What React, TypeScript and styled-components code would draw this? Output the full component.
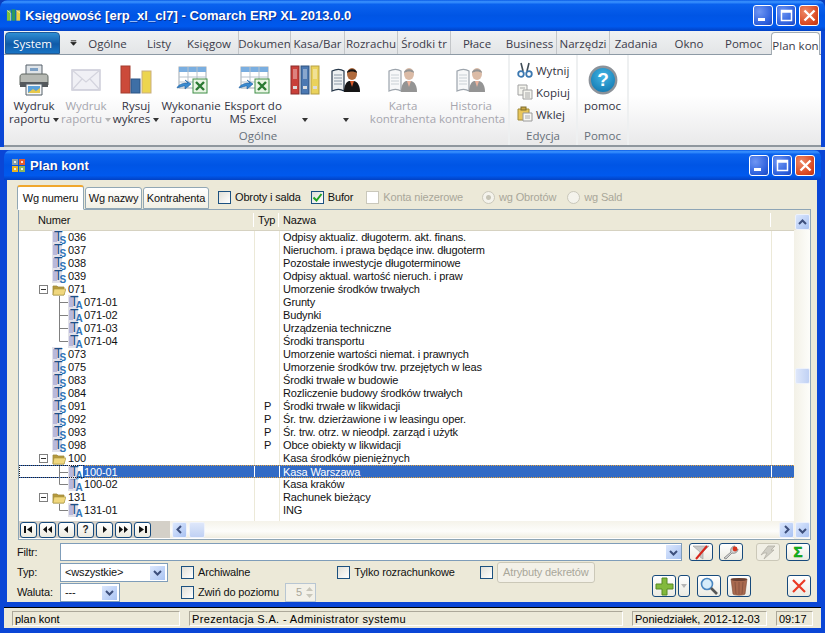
import React from "react";
import styled, { createGlobalStyle, css } from "styled-components";

const GlobalStyle = createGlobalStyle`
  html, body { margin: 0; padding: 0; background: #0b3fbd; }
  body { font-family: "Liberation Sans", "DejaVu Sans", sans-serif; }
  * { box-sizing: border-box; }
`;

const UI = `"Liberation Sans", "DejaVu Sans", sans-serif`;
const RIBBON = `"Open Sans", "DejaVu Sans", sans-serif`;

const Frame = styled.div`
  width: 825px;
  height: 633px;
  display: flex;
  flex-direction: column;
  overflow: hidden;
  padding: 0 4px 5px;
  background: #0a46d6;
  border-radius: 8px 8px 0 0;
`;

const TitleBar = styled.div<{ $h: number; $inner?: boolean }>`
  height: ${(p) => p.$h}px;
  flex: none;
  display: flex;
  align-items: center;
  gap: 3px;
  margin: ${(p) => (p.$inner ? "0" : "0 -4px")};
  padding: ${(p) => (p.$inner ? "0 6px 0 7px" : "0 6px 0 6px")};
  background: linear-gradient(180deg, #0a5be6 0, #3d95ff 6%, #0a62ee 14%, #0055e5 50%, #0059ee 85%, #0241c4 100%);
  border-radius: 7px 7px 0 0;
`;

const TitleText = styled.div<{ $ml: number }>`
  flex: 1;
  margin-left: ${(p) => p.$ml}px;
  color: #fff;
  font: bold 13px ${UI};
  letter-spacing: 0.05px;
  text-shadow: 1px 1px 0 #0b2f90;
  white-space: nowrap;
`;

const WinBtn = styled.div<{ $close?: boolean }>`
  width: 20px;
  height: 21px;
  flex: none;
  border: 1px solid #fff;
  border-radius: 3px;
  display: flex;
  align-items: center;
  justify-content: center;
  background: ${(p) =>
    p.$close
      ? "radial-gradient(circle at 30% 30%, #ee8a68, #d8461f 70%, #b93311)"
      : "radial-gradient(circle at 30% 30%, #6f96f3, #2c5fdc 70%, #1c46bd)"};
`;

const TabsRow = styled.div`
  height: 24px;
  flex: none;
  display: flex;
  align-items: stretch;
  padding-left: 1px;
  background: linear-gradient(180deg, #f0f2f3, #e3e5e7);
  border-bottom: 1px solid #8d9aa5;
  font: 11.5px ${RIBBON};
`;

const SystemTab = styled.div`
  width: 55px;
  flex: none;
  margin-top: 1px;
  padding-top: 1px;
  display: flex;
  align-items: center;
  justify-content: center;
  color: #fff;
  border-radius: 4px 4px 0 0;
  border: 1px solid #1d5a98;
  background: linear-gradient(180deg, #2e8fd4, #0f5aa8 55%, #1974c4);
`;

const QuickArrow = styled.div`
  width: 17px;
  flex: none;
  padding-left: 10px;
  display: flex;
  align-items: center;
  justify-content: center;
`;

const RibbonTab = styled.div<{ $w: number; $divider?: boolean; $active?: boolean }>`
  width: ${(p) => p.$w}px;
  flex: none;
  padding-top: 2px;
  display: flex;
  align-items: center;
  justify-content: center;
  overflow: hidden;
  white-space: nowrap;
  color: #3b3b4a;
  ${(p) => p.$divider && "border-right: 1px solid #c3c6c9;"}
  ${(p) =>
    p.$active &&
    css`
      background: #fff;
      margin-bottom: -1px;
      margin-top: 1px;
      border: 1px solid #a3acb3;
      border-bottom: 0;
      border-radius: 4px 4px 0 0;
    `}
`;

const Ribbon = styled.div`
  height: 92px;
  flex: none;
  display: flex;
  padding-left: 4px;
  background: linear-gradient(180deg, #fff 0, #fff 45%, #e9e9ea 100%);
  border-bottom: 2px solid #8f979e;
  font: 11.5px/13px ${RIBBON};
`;

const RibbonGroup = styled.div<{ $w: number }>`
  width: ${(p) => p.$w}px;
  flex: none;
  display: flex;
  flex-direction: column;
  border-right: 2px solid #eef0f1;
`;

const GroupBody = styled.div`
  flex: 1;
  display: flex;
  min-height: 0;
`;

const GroupLabel = styled.div`
  height: 17px;
  flex: none;
  text-align: center;
  color: #67707a;
  line-height: 15px;
`;

const BigBtn = styled.div<{ $w: number; $off?: boolean }>`
  width: ${(p) => p.$w}px;
  flex: none;
  padding-top: 6px;
  text-align: center;
  color: ${(p) => (p.$off ? "#a6a6ae" : "#333342")};
  white-space: nowrap;
`;

const BigIcon = styled.div`
  height: 37px;
  margin-bottom: 1px;
  display: flex;
  align-items: center;
  justify-content: center;
`;

const Caret = styled.span<{ $off?: boolean; $bare?: boolean }>`
  display: inline-block;
  vertical-align: middle;
  margin-left: ${(p) => (p.$bare ? 0 : 3)}px;
  border: 3px solid transparent;
  border-top: 4px solid ${(p) => (p.$off ? "#b5b5b5" : "#333")};
  border-bottom: 0;
`;

const SmallStack = styled.div`
  flex: none;
  width: 66px;
  padding: 6px 0 0 7px;
  display: flex;
  flex-direction: column;
  gap: 4px;
  color: #333342;
`;

const SmallBtn = styled.div`
  height: 18px;
  display: flex;
  align-items: center;
  gap: 3px;
`;

const Gap = styled.div`
  height: 3px;
  flex: none;
  background: #dfe1e3;
  margin: 0 -4px;
`;

const Blue = styled.div`
  flex: 1;
  min-height: 0;
  display: flex;
  flex-direction: column;
  background: #0a46d6;
  border-bottom: 1px solid #000;
`;

const Client = styled.div`
  flex: 1;
  min-height: 0;
  display: flex;
  flex-direction: column;
  padding: 5px 6px 0 10px;
  margin: 0 4px 5px 3px;
  background: #ece9d8;
  color: #111;
  font: 11px/13px ${UI};
  letter-spacing: -0.15px;
`;

const Strip = styled.div`
  height: 24px;
  flex: none;
  display: flex;
  align-items: center;
  position: relative;
  z-index: 1;
`;

const PageTab = styled.div<{ $w: number; $active?: boolean }>`
  width: ${(p) => p.$w}px;
  height: ${(p) => (p.$active ? 25 : 22)}px;
  margin-right: 1px;
  margin-bottom: ${(p) => (p.$active ? -1 : 0)}px;
  display: flex;
  align-items: center;
  justify-content: center;
  align-self: flex-end;
  background: ${(p) => (p.$active ? "#fff" : "linear-gradient(180deg,#fff,#f1efe4)")};
  border: 1px solid #91a7b4;
  border-bottom: ${(p) => (p.$active ? "1px solid #fff" : "1px solid #91a7b4")};
  border-top: ${(p) => (p.$active ? "2px solid #f0a72e" : "1px solid #91a7b4")};
  border-radius: 3px 3px 0 0;
`;

const Check = styled.div<{ $ml?: number }>`
  display: flex;
  align-items: center;
  gap: 4px;
  margin-left: ${(p) => p.$ml ?? 0}px;
  white-space: nowrap;
`;

const CheckBox = styled.div<{ $off?: boolean }>`
  width: 13px;
  height: 13px;
  flex: none;
  display: flex;
  align-items: center;
  justify-content: center;
  border: 1px solid ${(p) => (p.$off ? "#cac8bb" : "#1c5180")};
  background: ${(p) => (p.$off ? "#fff" : "linear-gradient(135deg,#e0dfd7,#fff)")};
`;

const Radio = styled.div<{ $dot?: boolean }>`
  width: 13px;
  height: 13px;
  flex: none;
  border-radius: 50%;
  border: 1px solid #cac8bb;
  background: radial-gradient(circle, ${(p) => (p.$dot ? "#c6c4b6 0 2px" : "#f4f3ec 0 2px")}, #f4f3ec 3px);
`;

const Muted = styled.span`
  color: #a9a79a;
`;

const Panel = styled.div`
  height: 331px;
  flex: none;
  margin-left: 1px;
  display: flex;
  border: 1px solid #8ea5b6;
  background: #fff;
`;

const Columns = "235px 25px 492px 1fr";

const HeaderRow = styled.div`
  height: 21px;
  flex: none;
  display: grid;
  grid-template-columns: ${Columns};
  align-items: end;
  padding-bottom: 3px;
  background: #ece9d8;
  border-bottom: 1px solid #d6d2c1;
`;

const HeadCell = styled.div<{ $pad: number }>`
  height: 14px;
  padding-left: ${(p) => p.$pad}px;
  border-right: 1px solid #fff;
  line-height: 14px;
`;

const ListCol = styled.div`
  flex: 1;
  min-width: 0;
  display: flex;
  flex-direction: column;
`;

const Rows = styled.div`
  flex: 1;
  min-height: 0;
  background-image: linear-gradient(#ece9d8, #ece9d8), linear-gradient(#ece9d8, #ece9d8), linear-gradient(#ece9d8, #ece9d8);
  background-size: 1px 100%;
  background-repeat: no-repeat;
  background-position: 235px 0, 260px 0, 752px 0;
`;

const RowBox = styled.div<{ $sel?: boolean }>`
  height: 13px;
  display: grid;
  grid-template-columns: ${Columns};
  line-height: 13px;
  white-space: nowrap;
  ${(p) =>
    p.$sel &&
    css`
      position: relative;
      color: #fff;
      background-color: #316ac5;
      background-image: linear-gradient(#fff, #fff), linear-gradient(#fff, #fff), linear-gradient(#fff, #fff), linear-gradient(#fff, #fff);
      background-size: 64px 100%, 1px 100%, 1px 100%, 1px 100%;
      background-position: 0 0, 235px 0, 260px 0, 752px 0;
      background-repeat: no-repeat;
      border-top: 1px dotted #e8a33a;
      border-bottom: 1px dotted #e8a33a;
      &::before {
        content: "";
        position: absolute;
        left: 0;
        top: -1px;
        bottom: -1px;
        width: 64px;
        border: 1px dotted #222;
        border-right: 0;
      }
    `}
`;

const TreeCell = styled.div`
  display: flex;
  align-items: center;
  height: 13px;
`;

const Spacer = styled.div<{ $w: number }>`
  width: ${(p) => p.$w}px;
  height: 100%;
  flex: none;
`;

const Expander = styled.div`
  width: 9px;
  height: 9px;
  flex: none;
  margin-left: 20px;
  margin-right: 4px;
  border: 1px solid #7f7f7f;
  position: relative;
  background: #fff;
  &::after {
    content: "";
    position: absolute;
    left: 1px;
    right: 1px;
    top: 3px;
    height: 1px;
    background: #333;
  }
`;

const Code = styled.span`
  margin-left: 1px;
  position: relative;
`;

const TypCell = styled.div`
  text-align: center;
  padding-left: 2px;
`;

const NameCell = styled.div`
  padding-left: 4px;
  overflow: hidden;
`;

const HBar = styled.div`
  height: 17px;
  margin-bottom: 1px;
  flex: none;
  display: flex;
  align-items: center;
  background: linear-gradient(180deg, #f5f3ea, #fdfdfb 60%, #f0ede1);
`;

const NavGroup = styled.div`
  width: 151px;
  height: 100%;
  flex: none;
  display: flex;
  align-items: center;
  padding-left: 1px;
  gap: 2px;
  background: #d4d0c8;
`;

const NavBtn = styled.div`
  width: 17px;
  height: 16px;
  flex: none;
  display: flex;
  align-items: center;
  justify-content: center;
  border: 1px solid #174a7c;
  border-radius: 3px;
  background: linear-gradient(180deg, #fff, #eceadf);
  font: bold 10px ${UI};
  color: #222;
`;

const ScrollArrow = styled.div<{ $ml?: number }>`
  width: 15px;
  height: 16px;
  flex: none;
  margin-left: ${(p) => p.$ml ?? 0}px;
  display: flex;
  align-items: center;
  justify-content: center;
  border: 1px solid #eef2fb;
  border-radius: 2px;
  background: linear-gradient(135deg, #dbe7fd, #a9c2f2);
`;

const ThumbH = styled(ScrollArrow)`
  width: 16px;
  margin-left: 2px;
  background: linear-gradient(180deg, #dee7fa, #c0d1f4);
`;

const Flex1 = styled.div`
  flex: 1;
`;

const VBar = styled.div`
  width: 16px;
  flex: none;
  display: flex;
  flex-direction: column;
  align-items: center;
  padding: 4px 0 1px;
  background:
    linear-gradient(#ece9d8, #ece9d8) 0 0 / 100% 20px no-repeat,
    linear-gradient(90deg, #f3f1e7, #fdfdfa);
`;

const VThumb = styled(ScrollArrow)`
  margin-top: 138px;
  background: linear-gradient(90deg, #dee7fa, #c0d1f4);
`;

const Foot = styled.div`
  flex: 1;
  min-height: 0;
  padding-top: 2px;
  display: grid;
  grid-template-columns: 43px 108px 13px 1fr;
  grid-template-rows: 20px 21px 19px;
`;

const FieldLabel = styled.div<{ $row?: number }>`
  align-self: center;
  ${(p) => p.$row && `grid-row: ${p.$row}; grid-column: 1;`}
`;

const FilterRow = styled.div`
  grid-column: 2 / 5;
  display: flex;
  align-items: center;
`;

const Input = styled.div<{ $w?: number; $row?: number }>`
  width: ${(p) => (p.$w ? `${p.$w}px` : "622px")};
  height: 18px;
  flex: none;
  display: flex;
  align-items: center;
  padding-left: 3px;
  border: 1px solid #7f9db9;
  background: #fff;
  ${(p) => p.$row && `grid-row: ${p.$row}; grid-column: 2;`}
`;

const Grow = styled.div`
  flex: 1;
`;

const DropBtn = styled.div`
  width: 15px;
  height: 14px;
  flex: none;
  display: flex;
  align-items: center;
  justify-content: center;
  background: linear-gradient(135deg, #dbe7fd, #aac4f3);
`;

const ToolBtn = styled.div<{ $w?: number; $ml?: number; $off?: boolean }>`
  width: ${(p) => p.$w ?? 24}px;
  height: 18px;
  flex: none;
  margin-left: ${(p) => p.$ml ?? 0}px;
  display: flex;
  align-items: center;
  justify-content: center;
  border: 1px solid ${(p) => (p.$off ? "#cbc8b8" : "#174a7c")};
  border-radius: 3px;
  background: ${(p) => (p.$off ? "#f1efe5" : "linear-gradient(180deg,#fff,#ecebe2)")};
`;

const TallBtn = styled(ToolBtn)`
  height: 22px;
`;

const OptRow = styled.div`
  grid-column: 3 / 5;
  grid-row: 2 / 4;
  display: flex;
  flex-direction: column;
`;

const OptLine = styled.div<{ $h: number }>`
  height: ${(p) => p.$h}px;
  flex: none;
  display: flex;
  align-items: center;
  padding-left: 13px;
`;

const AttrBtn = styled.div`
  width: 98px;
  height: 21px;
  margin-left: 4px;
  display: flex;
  align-items: center;
  justify-content: center;
  color: #a9a79a;
  border: 1px solid #cbc8b8;
  border-radius: 3px;
  background: #f3f1e8;
`;

const Spin = styled.div`
  width: 31px;
  height: 19px;
  margin-left: 6px;
  flex: none;
  display: flex;
  align-items: center;
  justify-content: space-between;
  padding: 0 1px 0 10px;
  color: #a9a79a;
  background: #f3f1e8;
  border: 1px solid #b8c6d2;
`;

const SelectBox = styled(Input)`
  justify-content: space-between;
  padding: 0 2px 0 4px;
  align-self: center;
  height: 19px;
`;

const BtnCluster = styled.div`
  margin-top: -13px;
  display: flex;
  align-items: flex-start;
`;

const StatusBar = styled.div`
  height: 20px;
  flex: none;
  display: flex;
  align-items: center;
  gap: 9px;
  padding: 0 5px 0 8px;
  background: #ece9d8;
  font: 11px ${UI};
`;

const StatusPane = styled.div<{ $w: number; $ls?: number }>`
  width: ${(p) => p.$w}px;
  height: 15px;
  flex: none;
  padding-left: 2px;
  line-height: 14px;
  letter-spacing: ${(p) => p.$ls ?? 0}px;
  white-space: nowrap;
  overflow: hidden;
  border: 1px solid;
  border-color: #aca899 #fff #fff #aca899;
`;

/* ---- icons ---- */

const MdiLogo = () => (
  <svg width="16" height="17" viewBox="0 0 17 17">
    <rect x="1" y="3" width="4" height="11" fill="#7fc23a" />
    <rect x="6" y="2" width="4" height="12" fill="#2e9a5a" />
    <rect x="11" y="3" width="4" height="11" fill="#e8d040" />
    <path d="M1 3l4 3v8M11 3l4 3" stroke="#fff" strokeWidth="0.6" fill="none" />
  </svg>
);

const MiniWin = ({ kind }: { kind: "min" | "max" | "close" }) => (
  <svg width="15" height="15" viewBox="0 0 15 15">
    {kind === "min" && <rect x="2" y="10" width="7" height="3" fill="#fff" />}
    {kind === "max" && <path d="M2.500 2.500h10v10h-10zM2.500 4h10" stroke="#fff" strokeWidth="1.500" fill="none" />}
    {kind === "close" && <path d="M2.500 2.500l10 10M12.500 2.500l-10 10" stroke="#fff" strokeWidth="2.400" />}
  </svg>
);

const PlanIcon = () => (
  <svg width="15" height="15" viewBox="0 0 15 15">
    <rect x="1" y="1" width="6" height="6" fill="#8aa0a8" />
    <rect x="8" y="1" width="6" height="6" fill="#e25a2c" />
    <rect x="1" y="8" width="6" height="6" fill="#eab321" />
    <rect x="8" y="8" width="6" height="6" fill="#8fb65c" />
    <path d="M3 3h2v2H3zM10 3h2v2h-2zM3 10h2v2H3zM10 10h2v2h-2z" fill="#fff" opacity=".8" />
  </svg>
);

const Printer = () => (
  <svg width="32" height="32" viewBox="0 0 32 32">
    <path d="M8 1h16v10H8z" fill="#dfe4e8" stroke="#56606a" />
    <path d="M12 4h8v3h-8z" fill="#7da0c4" />
    <path d="M2 13c0-2 1-3 3-3h22c2 0 3 1 3 3v8H2z" fill="#b6b9b3" stroke="#5e6660" />
    <path d="M2 18h28v5H2z" fill="#54595c" />
    <path d="M8 20h16v11H8z" fill="#f5f6f6" stroke="#54606a" />
    <path d="M10 22h12v7H10z" fill="#5aa0d8" />
    <path d="M10 29l5-4 3 2 4-3v5z" fill="#e7c94c" />
  </svg>
);

const Envelope = () => (
  <svg width="30" height="24" viewBox="0 0 30 24">
    <path d="M1 2h28v20H1z" fill="#f0f0f5" stroke="#c9c9d6" strokeWidth="1.400" />
    <path d="M1 2l14 12L29 2M1 22l10-11M29 22L19 11" fill="none" stroke="#d4d4de" strokeWidth="1.200" />
  </svg>
);

const Bars = () => (
  <svg width="32" height="32" viewBox="0 0 32 32">
    <rect x="1" y="2" width="9" height="27" fill="#cc4a3a" stroke="#a33c2e" />
    <rect x="11" y="15" width="9" height="14" fill="#3e6fa6" stroke="#2b5485" />
    <rect x="22" y="7" width="9" height="22" fill="#ecd54f" stroke="#c9ae7e" />
  </svg>
);

const SheetExport = () => (
  <svg width="34" height="28" viewBox="0 0 34 28">
    <rect x="5" y="1" width="27" height="21" fill="#fff" stroke="#9fa9b2" />
    <rect x="5" y="1" width="27" height="5" fill="#7aaee0" />
    <path d="M5 11h27M5 16h27M14 1v21M23 1v21" stroke="#b7c2cc" />
    <rect x="19" y="13" width="14" height="14" fill="#e9f5e4" stroke="#3f8e47" />
    <path d="M22 16l8 8M30 16l-8 8" stroke="#2b7a33" strokeWidth="2.400" />
    <path d="M14 17c-6 0-10 2-11 5 3-1 6-2 8-2v3l6-5-6-4z" fill="#3a8bd0" stroke="#1d5c9e" strokeWidth=".6" />
  </svg>
);

const Binders = () => (
  <svg width="30" height="30" viewBox="0 0 30 30">
    <rect x="1" y="1" width="8" height="28" fill="#c9403a" stroke="#8a2c2a" />
    <rect x="11" y="1" width="8" height="28" fill="#4b78b2" stroke="#2f527f" />
    <rect x="21" y="1" width="8" height="28" fill="#ead25c" stroke="#b8a244" />
    <path d="M3 4h4v10H3zM13 4h4v10h-4zM23 4h4v10h-4z" fill="#fff" opacity=".35" />
    <path d="M3 21h4v3H3zM13 21h4v3h-4zM23 21h4v3h-4z" fill="#dcdcdc" />
  </svg>
);

const BookPerson = ({ off }: { off?: boolean }) => (
  <svg width="30" height="30" viewBox="0 0 30 30" opacity={off ? 0.45 : 1}>
    <path d="M1 6c4-2 9-2 12 0v20c-3-2-8-2-12 0z" fill="#eef1f2" stroke="#27384a" strokeWidth="1.200" />
    <path d="M3 10h8M3 13h8M3 16h8M3 19h8" stroke="#8a98a6" />
    <path d="M13 27c0-6 2-10 5-11h5c4 1 6 5 6 11z" fill="#151515" />
    <path d="M19 16l2 6 2-6z" fill="#d65a2a" />
    <ellipse cx="21" cy="9" rx="5" ry="6" fill="#b06a3c" />
    <path d="M16 8c0-5 10-5 10 0-3-2-7-2-10 0z" fill="#151515" />
  </svg>
);

const Scissors = () => (
  <svg width="16" height="16" viewBox="0 0 16 16">
    <path d="M6 9L4 1M10 9l2-8" stroke="#3f4c57" strokeWidth="1.600" />
    <circle cx="4" cy="12" r="2.800" fill="#fff" stroke="#3a77b0" strokeWidth="1.800" />
    <circle cx="12" cy="12" r="2.800" fill="#fff" stroke="#3a77b0" strokeWidth="1.800" />
  </svg>
);

const CopyIcon = () => (
  <svg width="16" height="16" viewBox="0 0 16 16">
    <path d="M1 1h9v10H1z" fill="#f4f4ee" stroke="#a0a0a0" />
    <path d="M6 6h9v9H6z" fill="#f4f4ee" stroke="#a0a0a0" />
    <path d="M3 4h5M8 9h5M8 11h5M8 13h5" stroke="#a8a8a8" />
  </svg>
);

const PasteIcon = () => (
  <svg width="16" height="16" viewBox="0 0 16 16">
    <path d="M1 3h11v11H1z" fill="#e9c65a" stroke="#a08a3a" />
    <rect x="4" y="1" width="5" height="3" fill="#c9a642" stroke="#7f6c2a" />
    <path d="M6 7h9v8H6z" fill="#f7f7f4" stroke="#9a9a9a" />
    <path d="M8 10h5M8 12h5" stroke="#aaa" />
  </svg>
);

const Help = () => (
  <svg width="30" height="30" viewBox="0 0 30 30">
    <defs>
      <radialGradient id="hb" cx=".5" cy=".35" r=".7">
        <stop offset="0" stopColor="#43b6e6" />
        <stop offset="1" stopColor="#0f74ad" />
      </radialGradient>
    </defs>
    <circle cx="15" cy="15" r="13.200" fill="url(#hb)" stroke="#8c9299" strokeWidth="2.400" />
    <text x="15" y="21" textAnchor="middle" fontFamily="Liberation Sans" fontWeight="bold" fontSize="19" fill="#fff">?</text>
  </svg>
);

const LeafIcon = ({ letter }: { letter: "S" | "A" }) => (
  <svg width="15" height="16" viewBox="0 0 15 16" style={{ flex: "none", margin: "-2px 0 -1px", overflow: "visible" }}>
    <rect x="0" y="1" width="10" height="14" fill="#e1e1ea" />
    <path d="M1 4h4M1 6h4M1 8h4M1 10h4M1 12h4" stroke="#7c7cc4" strokeWidth=".8" />
    <text x="2" y="12" fontFamily="Liberation Sans" fontSize="14" fill="#1c4f88">T</text>
    <text x="7.500" y="15" fontFamily="Liberation Sans" fontWeight="bold" fontSize="10" fill="#2f74b8">{letter}</text>
  </svg>
);

const Folder = () => (
  <svg width="14" height="12" viewBox="0 0 14 12" style={{ flex: "none" }}>
    <path d="M1 11V2h4l1 1h6v8z" fill="#b79a3c" stroke="#9f8a40" strokeWidth=".8" />
    <path d="M1 11l1-6h12l-2 6z" fill="#f0d77e" stroke="#a8933e" strokeWidth=".6" />
  </svg>
);

const Branch = ({ last }: { last?: boolean }) => (
  <svg width="9" height="13" viewBox="0 0 9 13" style={{ flex: "none", position: "relative" }}>
    <path d={last ? "M.5 0v6.500H9" : "M.5 0v13M.5 6.500H9"} stroke="#808080" fill="none" />
  </svg>
);

const Chevron = ({ dir }: { dir: "up" | "down" | "left" | "right" }) => {
  const d = {
    up: "M1 6l3.500-3.500L8 6",
    down: "M1 3l3.500 3.500L8 3",
    left: "M6 1L2.500 4.500 6 8",
    right: "M3 1l3.500 3.500L3 8",
  }[dir];
  return (
    <svg width="9" height="9" viewBox="0 0 9 9">
      <path d={d} stroke="#3d4f7c" strokeWidth="2" fill="none" />
    </svg>
  );
};

const NavGlyph = ({ d }: { d: string }) => (
  <svg width="11" height="9" viewBox="0 0 11 9">
    <path d={d} fill="#111" />
  </svg>
);

const FilterOff = () => (
  <svg width="18" height="15" viewBox="0 0 18 15">
    <path d="M1 1h16l-6 6v7l-3-2V7z" fill="#c8c8c8" stroke="#9a9a9a" strokeWidth=".6" />
    <path d="M15 1L4 14" stroke="#d8261c" strokeWidth="2" />
  </svg>
);

const Wrench = () => (
  <svg width="18" height="15" viewBox="0 0 18 15">
    <path d="M2 13l7-6c-1-3 1-6 4-6l-2 3 2 2 3-2c0 3-3 5-6 4l-6 6z" fill="#d3d3d3" stroke="#7c7c7c" strokeWidth=".8" />
    <circle cx="13" cy="4" r="2.400" fill="#d8351f" />
  </svg>
);

const Bolt = () => (
  <svg width="18" height="15" viewBox="0 0 18 15">
    <path d="M9 1h7l-4 4h3L5 14l3-6H5l-3 2z" fill="#cfcdc4" stroke="#b2b0a6" strokeWidth=".8" />
  </svg>
);

const Sigma = () => (
  <svg width="16" height="16" viewBox="0 0 16 16" style={{ overflow: "visible" }}>
    <text x="8" y="13" textAnchor="middle" fontFamily="Liberation Sans" fontWeight="bold" fontSize="15" fill="#0fc41a" stroke="#0a7d12" strokeWidth=".5">Σ</text>
  </svg>
);

const Plus = () => (
  <svg width="19" height="19" viewBox="0 0 19 19">
    <path d="M7 1h5v6h6v5h-6v6H7v-6H1V7h6z" fill="#82b93c" stroke="#568a25" />
  </svg>
);

const Loupe = () => (
  <svg width="18" height="18" viewBox="0 0 18 18">
    <circle cx="7" cy="7" r="5.500" fill="#d6ecfa" stroke="#4a86c0" strokeWidth="1.600" />
    <path d="M11 11l6 6" stroke="#565656" strokeWidth="2.600" />
  </svg>
);

const Bin = () => (
  <svg width="18" height="19" viewBox="0 0 18 19">
    <path d="M1 2h16l-2 15c-1 1.500-11 1.500-12 0z" fill="#a8694e" stroke="#7c4a36" strokeWidth=".6" />
    <ellipse cx="9" cy="2.500" rx="8" ry="1.600" fill="#6b4031" />
    <path d="M5 5l1 12M9 5v12M13 5l-1 12" stroke="#8a5540" />
  </svg>
);

const RedX = () => (
  <svg width="16" height="16" viewBox="0 0 16 16">
    <path d="M2 2l12 12M14 2L2 14" stroke="#ea3a24" strokeWidth="2.200" />
  </svg>
);

const Tick = () => (
  <svg width="11" height="11" viewBox="0 0 11 11">
    <path d="M1.500 5.500l3 3 5-6.500" stroke="#21a121" strokeWidth="2" fill="none" />
  </svg>
);

/* ---- data ---- */

type Row = {
  code: string;
  name: string;
  kind: "S" | "folder" | "A";
  typ?: string;
  last?: boolean;
  sel?: boolean;
};

const rows: Row[] = [
  { code: "036", name: "Odpisy aktualiz. długoterm. akt. finans.", kind: "S" },
  { code: "037", name: "Nieruchom. i prawa będące inw. długoterm", kind: "S" },
  { code: "038", name: "Pozostałe inwestycje długoterminowe", kind: "S" },
  { code: "039", name: "Odpisy aktual. wartość nieruch. i praw", kind: "S" },
  { code: "071", name: "Umorzenie środków trwałych", kind: "folder" },
  { code: "071-01", name: "Grunty", kind: "A" },
  { code: "071-02", name: "Budynki", kind: "A" },
  { code: "071-03", name: "Urządzenia techniczne", kind: "A" },
  { code: "071-04", name: "Środki transportu", kind: "A", last: true },
  { code: "073", name: "Umorzenie wartości niemat. i prawnych", kind: "S" },
  { code: "075", name: "Umorzenie środków trw. przejętych w leas", kind: "S" },
  { code: "083", name: "Środki trwałe w budowie", kind: "S" },
  { code: "084", name: "Rozliczenie budowy środków trwałych", kind: "S" },
  { code: "091", name: "Środki trwałe w likwidacji", kind: "S", typ: "P" },
  { code: "092", name: "Śr. trw. dzierżawione i w leasingu oper.", kind: "S", typ: "P" },
  { code: "093", name: "Śr. trw. otrz. w nieodpł. zarząd i użytk", kind: "S", typ: "P" },
  { code: "098", name: "Obce obiekty w likwidacji", kind: "S", typ: "P" },
  { code: "100", name: "Kasa środków pieniężnych", kind: "folder" },
  { code: "100-01", name: "Kasa Warszawa", kind: "A", sel: true },
  { code: "100-02", name: "Kasa kraków", kind: "A", last: true },
  { code: "131", name: "Rachunek bieżący", kind: "folder" },
  { code: "131-01", name: "ING", kind: "A", last: true },
];

const tabs: { t: string; w: number; d?: boolean }[] = [
  { t: "Ogólne", w: 61 },
  { t: "Listy", w: 42 },
  { t: "Księgow", w: 59, d: true },
  { t: "Dokumen", w: 52, d: true },
  { t: "Kasa/Bar", w: 54, d: true },
  { t: "Rozrachu", w: 53, d: true },
  { t: "Środki tr", w: 53, d: true },
  { t: "Płace", w: 52 },
  { t: "Business", w: 54, d: true },
  { t: "Narzędzi", w: 53, d: true },
  { t: "Zadania", w: 52 },
  { t: "Okno", w: 54 },
  { t: "Pomoc", w: 55 },
];

const TreeRow = ({ row }: { row: Row }) => {
  let tree: React.ReactNode;
  if (row.kind === "S") {
    tree = (
      <>
        <Spacer $w={33} />
        <LeafIcon letter="S" />
      </>
    );
  } else if (row.kind === "folder") {
    tree = (
      <>
        <Expander />
        <Folder />
        <Spacer $w={1} />
      </>
    );
  } else {
    tree = (
      <>
        <Spacer $w={40} />
        <Branch last={row.last} />
        <LeafIcon letter="A" />
      </>
    );
  }
  return (
    <RowBox $sel={row.sel}>
      <TreeCell>
        {tree}
        <Code>{row.code}</Code>
      </TreeCell>
      <TypCell>{row.typ}</TypCell>
      <NameCell>{row.name}</NameCell>
    </RowBox>
  );
};

const App = () => (
  <Frame>
    <GlobalStyle />
    <TitleBar $h={31}>
      <MdiLogo />
      <TitleText $ml={0}>Księgowość [erp_xl_cl7] - Comarch ERP XL 2013.0.0</TitleText>
      <WinBtn><MiniWin kind="min" /></WinBtn>
      <WinBtn><MiniWin kind="max" /></WinBtn>
      <WinBtn $close><MiniWin kind="close" /></WinBtn>
    </TitleBar>
    <TabsRow>
      <SystemTab>System</SystemTab>
      <QuickArrow>
        <svg width="9" height="8" viewBox="0 0 9 8">
          <path d="M1 1h7M1 3h7l-3.500 4z" stroke="#222" fill="#222" strokeWidth="1" />
        </svg>
      </QuickArrow>
      {tabs.map((x) => (
        <RibbonTab key={x.t} $w={x.w} $divider={x.d}>{x.t}</RibbonTab>
      ))}
      <RibbonTab $w={49} $active>Plan kon</RibbonTab>
    </TabsRow>
    <Ribbon>
      <RibbonGroup $w={502}>
        <GroupBody>
          <BigBtn $w={52}>
            <BigIcon><Printer /></BigIcon>
            Wydruk<br />raportu<Caret />
          </BigBtn>
          <BigBtn $w={52} $off>
            <BigIcon><Envelope /></BigIcon>
            Wydruk<br />raportu<Caret $off />
          </BigBtn>
          <BigBtn $w={48}>
            <BigIcon><Bars /></BigIcon>
            Rysuj<br />wykres<Caret />
          </BigBtn>
          <BigBtn $w={62}>
            <BigIcon><SheetExport /></BigIcon>
            Wykonanie<br />raportu
          </BigBtn>
          <BigBtn $w={62}>
            <BigIcon><SheetExport /></BigIcon>
            Eksport do<br />MS Excel
          </BigBtn>
          <BigBtn $w={41}>
            <BigIcon><Binders /></BigIcon>
            <br /><Caret $bare />
          </BigBtn>
          <BigBtn $w={42}>
            <BigIcon><BookPerson /></BigIcon>
            <br /><Caret $bare />
          </BigBtn>
          <BigBtn $w={72} $off>
            <BigIcon><BookPerson off /></BigIcon>
            Karta<br />kontrahenta
          </BigBtn>
          <BigBtn $w={64} $off>
            <BigIcon><BookPerson off /></BigIcon>
            Historia<br />kontrahenta
          </BigBtn>
        </GroupBody>
        <GroupLabel>Ogólne</GroupLabel>
      </RibbonGroup>
      <RibbonGroup $w={68}>
        <GroupBody>
          <SmallStack>
            <SmallBtn><Scissors />Wytnij</SmallBtn>
            <SmallBtn><CopyIcon />Kopiuj</SmallBtn>
            <SmallBtn><PasteIcon />Wklej</SmallBtn>
          </SmallStack>
        </GroupBody>
        <GroupLabel>Edycja</GroupLabel>
      </RibbonGroup>
      <RibbonGroup $w={51}>
        <GroupBody>
          <BigBtn $w={49}>
            <BigIcon><Help /></BigIcon>
            pomoc
          </BigBtn>
        </GroupBody>
        <GroupLabel>Pomoc</GroupLabel>
      </RibbonGroup>
    </Ribbon>
    <Gap />
    <Blue>
      <TitleBar $h={30} $inner>
        <PlanIcon />
        <TitleText $ml={1}>Plan kont</TitleText>
        <WinBtn><MiniWin kind="min" /></WinBtn>
        <WinBtn><MiniWin kind="max" /></WinBtn>
        <WinBtn $close><MiniWin kind="close" /></WinBtn>
      </TitleBar>
      <Client>
        <Strip>
          <PageTab $w={67} $active>Wg numeru</PageTab>
          <PageTab $w={57}>Wg nazwy</PageTab>
          <PageTab $w={66}>Kontrahenta</PageTab>
          <Check $ml={8}><CheckBox />Obroty i salda</Check>
          <Check $ml={10}><CheckBox><Tick /></CheckBox>Bufor</Check>
          <Check $ml={13}><CheckBox $off /><Muted>Konta niezerowe</Muted></Check>
          <Check $ml={19}><Radio $dot /><Muted>wg Obrotów</Muted></Check>
          <Check $ml={11}><Radio /><Muted>wg Sald</Muted></Check>
        </Strip>
        <Panel>
          <ListCol>
            <HeaderRow>
              <HeadCell $pad={19}>Numer</HeadCell>
              <HeadCell $pad={4}>Typ</HeadCell>
              <HeadCell $pad={4}>Nazwa</HeadCell>
            </HeaderRow>
            <Rows>
              {rows.map((r) => (
                <TreeRow key={r.code} row={r} />
              ))}
            </Rows>
            <HBar>
              <NavGroup>
                <NavBtn><NavGlyph d="M1 1h2v7H1zM9 1v7L4 4.500z" /></NavBtn>
                <NavBtn><NavGlyph d="M5 1v7L1 4.500zM10 1v7L6 4.500z" /></NavBtn>
                <NavBtn><NavGlyph d="M7 1v7L3 4.500z" /></NavBtn>
                <NavBtn>?</NavBtn>
                <NavBtn><NavGlyph d="M4 1v7l4-3.500z" /></NavBtn>
                <NavBtn><NavGlyph d="M1 1v7l4-3.500zM6 1v7l4-3.500z" /></NavBtn>
                <NavBtn><NavGlyph d="M2 1v7l5-3.500zM8 1h2v7H8z" /></NavBtn>
              </NavGroup>
              <ScrollArrow $ml={2}><Chevron dir="left" /></ScrollArrow>
              <ThumbH />
              <Flex1 />
              <ScrollArrow><Chevron dir="right" /></ScrollArrow>
            </HBar>
          </ListCol>
          <VBar>
            <ScrollArrow><Chevron dir="up" /></ScrollArrow>
            <VThumb />
            <Flex1 />
            <ScrollArrow><Chevron dir="down" /></ScrollArrow>
          </VBar>
        </Panel>
        <Foot>
          <FieldLabel>Filtr:</FieldLabel>
          <FilterRow>
            <Input>
              <Grow />
              <DropBtn><Chevron dir="down" /></DropBtn>
            </Input>
            <ToolBtn $ml={7}><FilterOff /></ToolBtn>
            <ToolBtn $ml={6}><Wrench /></ToolBtn>
            <ToolBtn $ml={13} $off><Bolt /></ToolBtn>
            <ToolBtn $ml={6}><Sigma /></ToolBtn>
          </FilterRow>
          <FieldLabel>Typ:</FieldLabel>
          <SelectBox $w={108}>
            &lt;wszystkie&gt;
            <DropBtn><Chevron dir="down" /></DropBtn>
          </SelectBox>
          <OptRow>
            <OptLine $h={21}>
              <Check><CheckBox />Archiwalne</Check>
              <Check $ml={87}><CheckBox />Tylko rozrachunkowe</Check>
              <Check $ml={25}><CheckBox /></Check>
              <AttrBtn>Atrybuty dekretów</AttrBtn>
            </OptLine>
            <OptLine $h={19}>
              <Check><CheckBox />Zwiń do poziomu</Check>
              <Spin>
                5
                <svg width="9" height="15" viewBox="0 0 9 15">
                  <path d="M1 6l3.500-4L8 6zM1 9l3.500 4L8 9z" fill="#c9c7bb" />
                </svg>
              </Spin>
              <Grow />
              <BtnCluster>
                <TallBtn $w={24}><Plus /></TallBtn>
                <TallBtn $w={12} $ml={2}><Caret $bare $off /></TallBtn>
                <TallBtn $w={24} $ml={7}><Loupe /></TallBtn>
                <TallBtn $w={24} $ml={6}><Bin /></TallBtn>
                <TallBtn $w={24} $ml={36}><RedX /></TallBtn>
              </BtnCluster>
            </OptLine>
          </OptRow>
          <FieldLabel $row={3}>Waluta:</FieldLabel>
          <SelectBox $w={60} $row={3}>
            ---
            <DropBtn><Chevron dir="down" /></DropBtn>
          </SelectBox>
        </Foot>
      </Client>
    </Blue>
    <StatusBar>
      <StatusPane $w={168}>plan kont</StatusPane>
      <StatusPane $w={434} $ls={0.35}>Prezentacja S.A. - Administrator systemu</StatusPane>
      <StatusPane $w={135}>Poniedziałek, 2012-12-03</StatusPane>
      <StatusPane $w={37}>09:17</StatusPane>
    </StatusBar>
  </Frame>
);

export default App;
